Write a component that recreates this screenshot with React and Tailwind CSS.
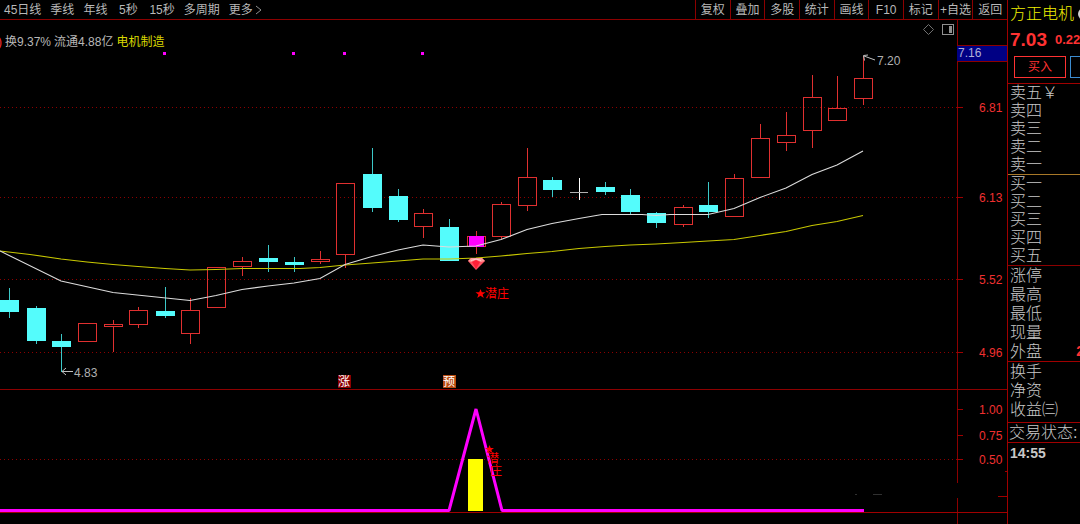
const periods = ['45日线', '季线', '年线', '5秒', '15秒', '多周期']
const tools = ['复权', '叠加', '多股', '统计', '画线', 'F10', '标记', '+自选', '返回']

// x, high, low, body top, body bottom, kind
const candles = [
  [9, 288, 318, 300, 312, 'down'],
  [36, 306, 344, 308, 341, 'down'],
  [61, 334, 372, 341, 347, 'down'],
  [87, 323, 341, 323, 341, 'up'],
  [113, 320, 352, 324, 326, 'up'],
  [138, 307, 328, 310, 324, 'up'],
  [165, 287, 318, 311, 316, 'down'],
  [190, 298, 344, 310, 333, 'up'],
  [216, 267, 307, 267, 307, 'up'],
  [242, 257, 276, 261, 266, 'up'],
  [268, 245, 272, 258, 262, 'down'],
  [294, 257, 272, 262, 265, 'down'],
  [320, 251, 264, 259, 261, 'up'],
  [345, 183, 268, 183, 254, 'up'],
  [372, 148, 212, 174, 208, 'down'],
  [398, 189, 222, 196, 220, 'down'],
  [423, 209, 238, 213, 226, 'up'],
  [449, 219, 261, 227, 261, 'down'],
  [476, 231, 254, 236, 246, 'signal'],
  [501, 202, 239, 204, 236, 'up'],
  [527, 148, 211, 177, 205, 'up'],
  [552, 177, 197, 180, 190, 'down'],
  [579, 178, 200, 192, 193, 'flat'],
  [605, 182, 195, 187, 192, 'down'],
  [630, 189, 215, 195, 212, 'down'],
  [656, 212, 228, 213, 223, 'down'],
  [683, 205, 227, 207, 224, 'up'],
  [708, 182, 218, 205, 212, 'down'],
  [734, 174, 216, 178, 216, 'up'],
  [760, 124, 177, 138, 177, 'up'],
  [786, 112, 151, 135, 142, 'up'],
  [812, 75, 148, 97, 130, 'up'],
  [837, 76, 121, 108, 120, 'up'],
  [863, 56, 105, 78, 98, 'up'],
]

const maShort = '0,251 61,281 113,292.5 190,300.5 216,295.5 242,289.5 268,286 294,283 320,278.5 345,264.5 372,256.5 398,250 423,245 449,247 476,246 501,239.5 527,229.5 552,223.5 579,218.5 602,214.5 642,214.5 656,215.5 670,214.5 708,214.5 734,208.5 760,197.5 786,188 812,174.5 837,165 863,151'
const maLong = '0,251 30,254.5 61,259 87,262 113,264.5 138,266.5 165,268.5 190,270 216,269.5 242,268.5 300,268.5 320,267.5 345,265 372,263 398,261 423,259 449,259 476,258 501,256 527,253.5 552,251.5 579,248.5 605,246.5 630,245 656,244 683,242.5 708,241 734,239.5 760,235.5 786,231.5 812,225.5 837,221.5 863,215.5'

const gridRows = [[107, '6.81'], [197, '6.13'], [279, '5.52'], [352, '4.96']]
const subRows = [[409, '1.00'], [435, '0.75'], [459, '0.50']]
const dots = [163, 292, 343, 421]

const sells = ['卖五￥', '卖四', '卖三', '卖二', '卖一']
const buys = ['买一', '买二', '买三', '买四', '买五']
const quotes = [['涨停'], ['最高'], ['最低'], ['现量'], ['外盘', '2']]
const basics = ['换手', '净资', '收益㈢']

function Candle({ data }) {
  const [x, high, low, top, bottom, kind] = data
  if (kind === 'flat') {
    return (
      <g>
        <rect x={x} y={high} width="1" height={low - high} fill="#fff" />
        <rect x={x - 9} y={top} width="18" height="1" fill="#b0b0b0" />
      </g>
    )
  }
  if (kind === 'down') {
    return (
      <g fill="#54fcfc">
        <rect x={x} y={high} width="1" height={low - high} fill="#3cc8c8" />
        <rect x={x - 9} y={top} width="19" height={bottom - top} />
      </g>
    )
  }
  return (
    <g>
      <rect x={x} y={high} width="1" height={top - high} fill="#e03030" />
      <rect x={x} y={bottom} width="1" height={low - bottom} fill="#e03030" />
      <rect x={x - 8.5} y={top + 0.5} width="18" height={bottom - top} fill="none" stroke="#e03030" />
      {kind === 'signal' && <rect x={x - 7} y={top} width="15" height={bottom - top + 1} fill="#ff00ff" />}
    </g>
  )
}

function GridLine({ y }) {
  return <line x1="0" x2="100%" y1={y + 0.5} y2={y + 0.5} stroke="#8c0000" strokeDasharray="1 3" shapeRendering="crispEdges" />
}

function AxisLabels({ rows }) {
  return rows.map(([y, label]) => (
    <g key={label}>
      <rect x="0" y={y} width="6" height="1" fill="#a00000" />
      <text x="22" y={y + 5} fill="#f03030" fontSize="12">{label}</text>
    </g>
  ))
}

function Row({ label, value }) {
  return (
    <div className="flex justify-between h-[19px] leading-[19px] whitespace-nowrap">
      <dt>{label}</dt>
      {value && <dd className="text-sm leading-[19px] font-bold text-[#ff3232] -mr-1">{value}</dd>}
    </div>
  )
}

export default function App() {
  return (
    <div className="flex min-h-screen bg-black overflow-hidden text-xs text-[#b8b8b8] font-['Liberation_Sans','Noto_Sans_CJK_SC',sans-serif]">
      <main className="flex-1 min-w-0 flex flex-col">
        <header className="flex justify-between h-5 border-b border-[#8c0000]">
          <nav className="flex items-center gap-[9px] pl-1 whitespace-nowrap">
            {periods.map((p) => <button key={p} className="min-w-6">{p}</button>)}
            <button className="flex items-center">
              更多
              <svg width="10" height="12" viewBox="0 0 10 12" fill="none" stroke="#909090"><path d="M3 2l5 4-5 4" /></svg>
            </button>
          </nav>
          <nav className="grid grid-cols-9 w-[312px] shrink-0">
            {tools.map((t) => <button key={t} className="border-l border-[#8c0000] whitespace-nowrap text-center">{t}</button>)}
          </nav>
        </header>

        <section className="flex h-[370px] border-b border-[#8c0000]">
          <div className="flex-1 min-w-0 overflow-hidden">
            <div className="flex justify-between h-8">
              <p className="flex items-end gap-[3px] leading-5 whitespace-nowrap">
                <span className="flex w-[2px] justify-end text-[#ff3232] overflow-hidden">)</span>
                <span>换9.37%</span>
                <span>流通4.88亿</span>
                <span className="text-[#d8d800]">电机制造</span>
              </p>
              <div className="flex items-center gap-2 h-[18px] pr-[3px]">
                <button aria-label="标记">
                  <svg width="11" height="11" viewBox="0 0 11 11" fill="none" stroke="#707070"><path d="M5.5 .5l5 5-5 5-5-5z" /></svg>
                </button>
                <button aria-label="侧栏">
                  <svg width="12" height="11" viewBox="0 0 12 11" shapeRendering="crispEdges">
                    <rect x=".5" y=".5" width="11" height="10" rx="1" fill="none" stroke="#909090" />
                    <rect x="7" y="2" width="3" height="7" fill="#909090" />
                  </svg>
                </button>
              </div>
            </div>
            <svg className="block w-full h-[337px]">
              <g transform="translate(0 -52)">
                {gridRows.map(([y]) => <GridLine key={y} y={y} />)}
                {dots.map((x) => <rect key={x} x={x} y="52" width="3" height="3" fill="#ff00ff" />)}
                <g shapeRendering="crispEdges">
                  {candles.map((c) => <Candle key={c[0]} data={c} />)}
                </g>
                <polyline points={maLong} fill="none" stroke="#c8c800" strokeWidth="1.2" />
                <polyline points={maShort} fill="none" stroke="#dcdcdc" strokeWidth="1.1" />

                {/* high and low marks */}
                <g fill="none" stroke="#c0c0c0">
                  <path d="M875 60l-11-4M868 55l-4.500 .5 1 5" />
                  <path d="M73 371.500H62M66 368l-4 3.500 4 3.500" />
                </g>
                <text x="877" y="65" fill="#b0b0b0" fontSize="12">7.20</text>
                <text x="74" y="377" fill="#b0b0b0" fontSize="12">4.83</text>

                {/* gem under the signal candle */}
                <path d="M468 261l3-3h11l3 3-9 9z" fill="#ff5060" />
                <path d="M468 261l3-3h11l3 3-4 1-5-2-5 2z" fill="#ff9a9a" />
                <path d="M472 262l4-2 4 2-4 7z" fill="#ff2038" />
                <path d="M471 260.500q5-3 10 0" fill="none" stroke="#ffd0d0" />

                <path d="M480.500 289l1.300 3.200h3.700l-2.900 2.200 1.200 3.600-3.300-2.200-3.300 2.200 1.200-3.600-2.900-2.200h3.700z" fill="#ff0000" />
                <text x="485" y="298" fill="#ff0000" fontSize="12">潜庄</text>

                <rect x="338" y="375" width="13" height="13" fill="#8c0000" />
                <text x="338" y="386" fill="#fff" fontSize="12">涨</text>
                <rect x="443" y="375" width="13" height="13" fill="#b84a10" />
                <text x="443" y="386" fill="#fff" fontSize="12">预</text>
              </g>
            </svg>
          </div>
          <svg className="w-[50px] shrink-0 h-full">
            <g transform="translate(0 -20)">
              <rect x="0" y="20" width="1" height="369" fill="#8c0000" />
              <rect x="0" y="46" width="50" height="15" fill="#000084" />
              <rect x="0" y="45" width="50" height="1" fill="#8c0000" />
              <rect x="0" y="61" width="50" height="1" fill="#8c0000" />
              <text x="1" y="57" fill="#b0b0d8" fontSize="12">7.16</text>
              <AxisLabels rows={gridRows} />
            </g>
          </svg>
        </section>

        <section className="flex flex-1 min-h-[134px] overflow-hidden">
          <svg className="flex-1 min-w-0 h-[134px]">
            <g transform="translate(0 -390)">
              <GridLine y={459} />
              <rect x="0" y="512" width="100%" height="1" fill="#a00000" />
              <rect x="468" y="459" width="15" height="52" fill="#ffff00" />
              <polyline points="0,510.500 449,510.500 476,409 502,510.500 864,510.500" fill="none" stroke="#ff00ff" strokeWidth="3" strokeLinejoin="bevel" />
              <path d="M489.500 445l1.200 3h3.300l-2.600 2 1 3-2.900-1.800-2.900 1.800 1-3-2.600-2h3.300z" fill="#ff0000" />
              <text x="487" y="463" fill="#ff0000" fontSize="12">潜</text>
              <text x="490" y="475" fill="#ff0000" fontSize="12">庄</text>
              <path d="M855 494.500h2M873 494.500h9" stroke="#303030" />
            </g>
          </svg>
          <svg className="w-[50px] shrink-0 h-[134px]">
            <g transform="translate(0 -390)">
              <rect x="0" y="390" width="1" height="93" fill="#8c0000" />
              <rect x="0" y="498" width="1" height="26" fill="#8c0000" />
              <rect x="0" y="512" width="50" height="1" fill="#a00000" />
              <rect x="41" y="496" width="9" height="1" fill="#a00000" />
              <rect x="48" y="471" width="2" height="1" fill="#a00000" />
              <AxisLabels rows={subRows} />
            </g>
          </svg>
        </section>
      </main>

      <aside className="w-[73px] shrink-0 border-l border-[#a00000] overflow-hidden text-base font-light text-[#c8c8c8]">
        <div className="h-[83px] pl-[2px] pt-1">
          <h1 className="flex items-center gap-1 h-5 text-[#f0f000] whitespace-nowrap">
            方正电机
            <span className="size-3 rounded-full bg-[#d0d0d0] shrink-0" />
          </h1>
          <p className="flex items-center gap-2 h-8 font-bold text-[#ff3232] whitespace-nowrap">
            <strong className="text-[19px]">7.03</strong>
            <span className="text-[13px]">0.22</span>
          </p>
          <div className="flex gap-1 pl-1 text-xs font-normal">
            <button className="w-[52px] h-[22px] shrink-0 border border-[#ff3232] text-[#ff3232]">买入</button>
            <button aria-label="卖出" className="w-[52px] h-[22px] shrink-0 border border-[#3c8cd0]" />
          </div>
        </div>
        <ul className="border-t border-[#a00000] pl-[2px]">
          {sells.map((s) => <li key={s} className="h-[18px] leading-[18px] whitespace-nowrap">{s}</li>)}
        </ul>
        <ul className="border-t border-[#a87828] pl-[2px]">
          {buys.map((b) => <li key={b} className="h-[18px] leading-[18px] whitespace-nowrap">{b}</li>)}
        </ul>
        <dl className="border-t border-[#8c0000] pl-[2px]">
          {quotes.map(([label, value]) => <Row key={label} label={label} value={value} />)}
        </dl>
        <dl className="border-t border-[#a00000] pl-[2px] pb-[3px]">
          {basics.map((b) => <Row key={b} label={b} />)}
        </dl>
        <p className="border-y border-[#a00000] h-[21px] leading-[19px] pl-[1px] whitespace-nowrap">交易状态:</p>
        <time className="block pl-[2px] text-sm leading-5 font-bold">14:55</time>
      </aside>
    </div>
  )
}
